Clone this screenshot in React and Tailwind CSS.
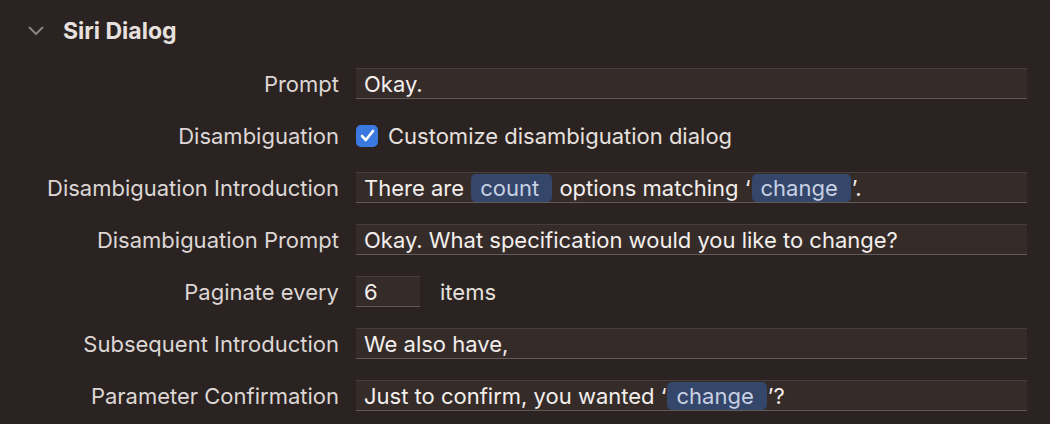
import React from "react";

const Token = ({ children }) => (
  <span className="inline-block h-[28px] leading-[28px] mx-[1px] pl-[9px] pr-[13px] rounded-[5px] bg-[#34466a] text-[#c8d1e3]">
    {children}
  </span>
);

const Field = ({ children, className = "" }) => (
  <div
    className={
      "h-[31px] flex items-center pl-[8px] pt-[1px] bg-[#352c2a] border-t border-t-[#463e3c] border-b border-b-[#625a58] text-[#f3efed] whitespace-pre " +
      className
    }
  >
    <span>{children}</span>
  </div>
);

const Label = ({ children }) => (
  <div className="h-[31px] flex items-center justify-end pt-[1px] text-[#dcd7d5] whitespace-nowrap">{children}</div>
);

export default function App() {
  return (
    <div
      className="w-[1050px] h-[424px] bg-[#2b2321] overflow-hidden text-[22px] leading-none"
      style={{ fontFamily: "Inter, 'Noto Sans', sans-serif" }}
    >
      <div className="flex items-center h-[62px] pl-[28px] pt-[0px]">
        <svg width="16" height="10" viewBox="0 0 16 10" className="mr-[19px]">
          <path d="M1.5 1.5 L8 8 L14.5 1.5" fill="none" stroke="#8a8381" strokeWidth="2" strokeLinecap="round" strokeLinejoin="round" />
        </svg>
        <span className="font-bold text-[#e6e1df] text-[23px]">Siri Dialog</span>
      </div>
      <div className="grid grid-cols-[339px_1fr] gap-x-[17px] gap-y-[21px] pr-[23px] pt-[6px]">
        <Label>Prompt</Label>
        <Field>Okay.</Field>

        <Label>Disambiguation</Label>
        <div className="h-[31px] flex items-center">
          <div className="w-[22px] h-[22px] rounded-[5px] bg-[#3a79df] flex items-center justify-center mr-[10px]">
            <svg width="15" height="13" viewBox="0 0 15 13">
              <path d="M2 7 L5.8 11 L13 2" fill="none" stroke="white" strokeWidth="2.6" strokeLinecap="round" strokeLinejoin="round" />
            </svg>
          </div>
          <span className="text-[#e6e1df] pt-[1px]">Customize disambiguation dialog</span>
        </div>

        <Label>Disambiguation Introduction</Label>
        <Field>
          {"There are "}<Token>count</Token>{" options matching ‘"}<Token>change</Token>{"’."}
        </Field>

        <Label>Disambiguation Prompt</Label>
        <Field>Okay. What specification would you like to change?</Field>

        <Label>Paginate every</Label>
        <div className="flex items-center">
          <Field className="w-[64px]">6</Field>
          <span className="ml-[20px] pt-[1px] text-[#e6e1df]">items</span>
        </div>

        <Label>Subsequent Introduction</Label>
        <Field>We also have,</Field>

        <Label>Parameter Confirmation</Label>
        <Field>
          {"Just to confirm, you wanted ‘"}<Token>change</Token>{"’?"}
        </Field>
      </div>
    </div>
  );
}
